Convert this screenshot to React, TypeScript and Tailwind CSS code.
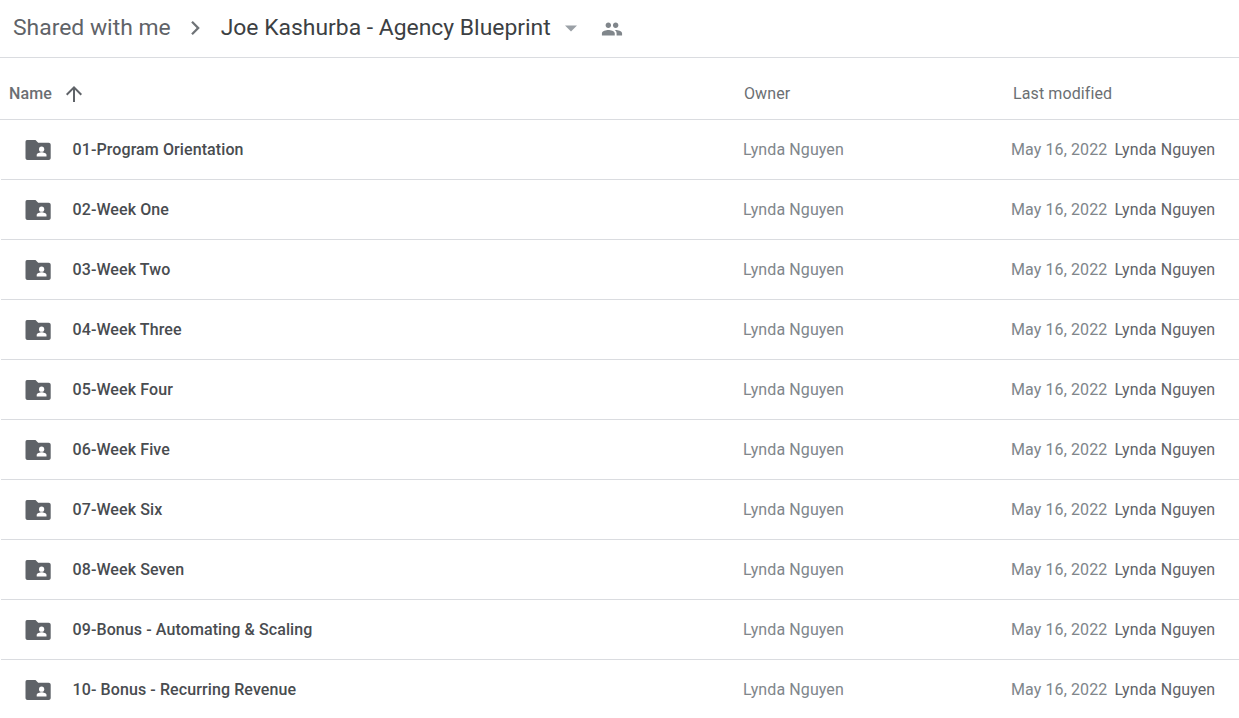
const rows = [
  "01-Program Orientation",
  "02-Week One",
  "03-Week Two",
  "04-Week Three",
  "05-Week Four",
  "06-Week Five",
  "07-Week Six",
  "08-Week Seven",
  "09-Bonus - Automating & Scaling",
  "10- Bonus - Recurring Revenue",
];

function SharedFolder() {
  return (
    <svg width="26" height="20" viewBox="0 0 26 20" className="block shrink-0">
      <path
        fill="#5f6368"
        d="M2 0h8.500l2.700 2.800h10.500c1.100 0 2 .9 2 2V18c0 1.100-.9 2-2 2H2.500c-1.100 0-2-.9-2-2V2C.5.900 1.100 0 2 0z"
      />
      <circle cx="16.600" cy="9.200" r="2.600" fill="#fff" />
      <path fill="#fff" d="M11.700 16.400v-1.400c0-1.800 3.300-2.700 4.900-2.700s4.900.9 4.900 2.700v1.400z" />
    </svg>
  );
}

export default function App() {
  return (
    <div className="w-[1239px] h-[718px] overflow-hidden bg-white font-['Roboto',sans-serif]">
      <div className="h-[58px] border-b border-[#dadce0] flex items-center pl-[13px] pb-[1px]">
        <span className="text-[22.9px] text-[#5f6368]">Shared with me</span>
        <svg width="9" height="14" viewBox="0 0 8.600 14" className="ml-[20px] mr-[21px]">
          <path fill="#6f7377" d="M1.600 0 0 1.600 5.400 7 0 12.400 1.600 14 8.600 7z" />
        </svg>
        <span className="text-[22.9px] text-[#3c4043]">Joe Kashurba - Agency Blueprint</span>
        <svg width="12" height="7" viewBox="0 0 14 8" className="ml-[14px] mt-[1px]">
          <path fill="#9aa0a6" d="M0 .5h14L7 7.500z" />
        </svg>
        <svg width="22" height="22" viewBox="0 0 24 24" className="ml-[24px] mt-[2px]">
          <path
            fill="#80868b"
            d="M16 11c1.660 0 2.990-1.340 2.990-3S17.660 5 16 5c-1.660 0-3 1.340-3 3s1.340 3 3 3zm-8 0c1.660 0 2.990-1.340 2.990-3S9.660 5 8 5C6.340 5 5 6.340 5 8s1.340 3 3 3zm0 2c-2.330 0-7 1.170-7 3.500V19h14v-2.500c0-2.330-4.670-3.500-7-3.500zm8 0c-.29 0-.62.02-.97.050 1.160.84 1.970 1.970 1.970 3.450V19h6v-2.500c0-2.330-4.670-3.500-7-3.500z"
          />
        </svg>
      </div>
      <div className="h-[62px] border-b border-[#dadce0] flex items-center pt-[10px] text-[16px] tracking-[0.1px] text-[#6b6f73]">
        <div className="w-[743px] flex items-center pl-[9px]">
          <span className="font-medium">Name</span>
          <svg width="24" height="24" viewBox="0 0 24 24" className="ml-[10px]">
            <path fill="#5f6368" d="M4 12l1.410 1.410L11 7.830V20h2V7.830l5.580 5.590L20 12l-8-8-8 8z" />
          </svg>
        </div>
        <div className="w-[269px] pl-px">Owner</div>
        <div className="pl-px">Last modified</div>
      </div>
      {rows.map((r) => (
        <div key={r} className="h-[60px] ml-px border-b border-[#dadce0] flex items-center text-[16px] tracking-[0.1px]">
          <div className="w-[742px] flex items-center pl-[24px]">
            <SharedFolder />
            <span className="ml-[21.5px] font-medium text-[#494c50]">{r}</span>
          </div>
          <div className="w-[268px] text-[#80868b]">Lynda Nguyen</div>
          <div className="text-[#80868b]">May 16, 2022</div>
          <div className="ml-[7px] text-[#5f6368]">Lynda Nguyen</div>
        </div>
      ))}
    </div>
  );
}
